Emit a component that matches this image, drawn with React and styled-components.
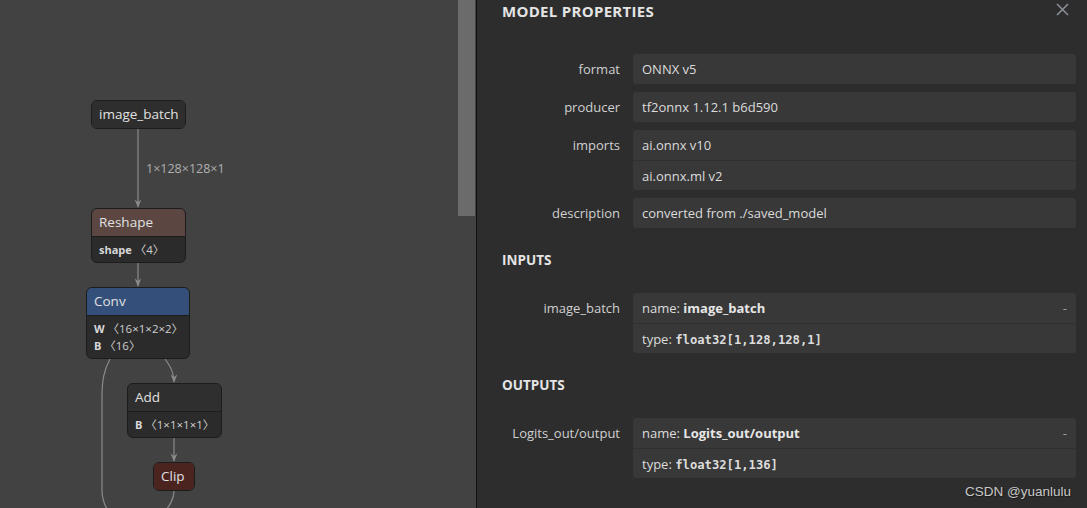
import React from 'react'
import styled, { createGlobalStyle } from 'styled-components'

// --- data ---
const NODES = [
  { id: 'input', title: 'image_batch', x: 91, y: 100, w: 95, kind: 'input' },
  { id: 'reshape', title: 'Reshape', x: 91, y: 208, w: 95, kind: 'shape', attrs: [['shape', '〈4〉']] },
  { id: 'conv', title: 'Conv', x: 86, y: 287, w: 104, kind: 'layer', attrs: [['W', '〈16×1×2×2〉'], ['B', '〈16〉']] },
  { id: 'add', title: 'Add', x: 127, y: 383, w: 95, kind: 'default', attrs: [['B', '〈1×1×1×1〉']] },
  { id: 'clip', title: 'Clip', x: 153, y: 462, w: 42, kind: 'activation' },
]

const HEADER_COLORS = {
  input: '#2e2e2e',
  default: '#2f2f2f',
  shape: '#5b4641',
  layer: '#34507a',
  activation: '#4b2420',
}

const PROPERTIES = [
  { name: 'format', values: ['ONNX v5'] },
  { name: 'producer', values: ['tf2onnx 1.12.1 b6d590'] },
  { name: 'imports', values: ['ai.onnx v10', 'ai.onnx.ml v2'] },
  { name: 'description', values: ['converted from ./saved_model'] },
]

const INPUTS = [{ name: 'image_batch', type: 'float32[1,128,128,1]' }]
const OUTPUTS = [{ name: 'Logits_out/output', type: 'float32[1,136]' }]

const GlobalStyle = createGlobalStyle`
  html, body {
    margin: 0;
    padding: 0;
    background: #2d2d2d;
  }
  body {
    font-family: "Open Sans", "Noto Sans", "Noto Sans CJK SC", sans-serif;
    -webkit-font-smoothing: antialiased;
  }
`

// --- graph ---
const Edges = () => (
  <EdgeLayer width="458" height="508">
    <defs>
      <marker id="arrow" viewBox="0 0 10 10" refX="9" refY="5" markerWidth="7" markerHeight="7" orient="auto">
        <path d="M0,1 L10,5 L0,9 L3,5 Z" fill="#8a8a8a" />
      </marker>
    </defs>
    <g stroke="#8a8a8a" strokeWidth="1.2" fill="none">
      <path d="M138,129 L138,207" markerEnd="url(#arrow)" />
      <path d="M138,263 L138,286" markerEnd="url(#arrow)" />
      <path d="M165,359 C170,366 174,372 174,382" markerEnd="url(#arrow)" />
      <path d="M174,437 L174,461" markerEnd="url(#arrow)" />
      <path d="M110,359 C104,370 102,380 102,398 L102,490 C102,502 106,510 114,518" />
      <path d="M174,491 C174,499 170,505 163,514" />
    </g>
    <EdgeLabel x="146" y="173">1×128×128×1</EdgeLabel>
  </EdgeLayer>
)

const GraphNode = ({ node }) => (
  <Node $x={node.x} $y={node.y} $w={node.w}>
    <NodeHeader $color={HEADER_COLORS[node.kind]} $round={!node.attrs}>
      {node.title}
    </NodeHeader>
    {node.attrs && (
      <NodeAttrs>
        {node.attrs.map(([k, v]) => (
          <NodeAttr key={k}>
            <b>{k}</b> <Bracketed>{v}</Bracketed>
          </NodeAttr>
        ))}
      </NodeAttrs>
    )}
  </Node>
)

// --- sidebar ---
const CloseIcon = () => (
  <svg width="13" height="13" viewBox="0 0 13 13">
    <path d="M1,1 L12,12 M12,1 L1,12" stroke="#8a8f96" strokeWidth="1.6" />
  </svg>
)

const PropRow = ({ name, children }) => (
  <Row>
    <RowLabel>{name}</RowLabel>
    <ValueBox>{children}</ValueBox>
  </Row>
)

const ArgRow = ({ arg }) => (
  <PropRow name={arg.name}>
    <ValueLine>
      <span>
        name: <b>{arg.name}</b>
      </span>
      <Toggle>-</Toggle>
    </ValueLine>
    <ValueLine>
      <span>
        type: <Code>{arg.type}</Code>
      </span>
    </ValueLine>
  </PropRow>
)

const App = () => {
  return (
    <>
      <GlobalStyle />
      <Page>
        <GraphArea>
          <Canvas>
            <Edges />
            {NODES.map((n) => (
              <GraphNode key={n.id} node={n} />
            ))}
          </Canvas>
          <ScrollTrack>
            <ScrollThumb />
          </ScrollTrack>
        </GraphArea>
        <Sidebar>
          <SidebarHeader>
            <SidebarTitle>MODEL PROPERTIES</SidebarTitle>
            <CloseButton>
              <CloseIcon />
            </CloseButton>
          </SidebarHeader>
          <SidebarContent>
            {PROPERTIES.map((p) => (
              <PropRow key={p.name} name={p.name}>
                {p.values.map((v) => (
                  <ValueLine key={v}>{v}</ValueLine>
                ))}
              </PropRow>
            ))}
            <SectionTitle>INPUTS</SectionTitle>
            {INPUTS.map((a) => (
              <ArgRow key={a.name} arg={a} />
            ))}
            <SectionTitle>OUTPUTS</SectionTitle>
            {OUTPUTS.map((a) => (
              <ArgRow key={a.name} arg={a} />
            ))}
          </SidebarContent>
          <Watermark>CSDN @yuanlulu</Watermark>
        </Sidebar>
      </Page>
    </>
  )
}

const Page = styled.div`
  display: flex;
  width: 100vw;
  height: 100vh;
  overflow: hidden;
`

const GraphArea = styled.div`
  display: flex;
  width: 476px;
  flex: none;
  background-color: #424242;
  border-right: 1px solid #111;
`

const Canvas = styled.div`
  position: relative;
  flex: 1;
  overflow: hidden;
`

const EdgeLayer = styled.svg`
  position: absolute;
  left: 0;
  top: 0;
`

const EdgeLabel = styled.text`
  font-family: "Open Sans", sans-serif;
  font-size: 12.5px;
  fill: #b0b0b0;
`

const ScrollTrack = styled.div`
  width: 18px;
  flex: none;
`

const ScrollThumb = styled.div`
  width: 17px;
  height: 216px;
  background-color: #6b6b6b;
`

const Node = styled.div`
  position: absolute;
  left: ${(p) => p.$x}px;
  top: ${(p) => p.$y}px;
  width: ${(p) => p.$w}px;
  box-sizing: border-box;
  border: 1px solid #1c1c1c;
  border-radius: 6px;
  overflow: hidden;
  background-color: #2b2b2b;
  color: #e0e0e0;
`

const NodeHeader = styled.div`
  height: 27px;
  padding: 0 7px;
  font-size: 13.5px;
  line-height: 27px;
  white-space: nowrap;
  background-color: ${(p) => p.$color};
  border-bottom: ${(p) => (p.$round ? 'none' : '1px solid #1c1c1c')};
`

const NodeAttrs = styled.div`
  padding: 4px 7px 4px;
`

const NodeAttr = styled.div`
  font-size: 11px;
  line-height: 17px;
  color: #cfcfcf;
  white-space: nowrap;

  b {
    font-weight: 700;
    color: #d8d8d8;
  }
`

const Bracketed = styled.span`
  font-family: "Open Sans", "Noto Sans CJK SC", sans-serif;
  font-size: 11.5px;
`

const Sidebar = styled.aside`
  position: relative;
  flex: 1;
  background-color: #2d2d2d;
  color: #d6d6d6;
`

const SidebarHeader = styled.div`
  display: flex;
  align-items: center;
  justify-content: space-between;
  height: 21px;
  padding: 0 18px 0 25px;
`

const SidebarTitle = styled.h1`
  margin: 0;
  font-size: 15px;
  font-weight: 700;
  color: #e4e4e4;
  letter-spacing: 0.3px;
`

const CloseButton = styled.div`
  display: flex;
  margin-top: -2px;
`

const SidebarContent = styled.div`
  padding: 33px 11px 0 25px;
`

const Row = styled.div`
  display: grid;
  grid-template-columns: 118px 1fr;
  column-gap: 13px;
  margin-bottom: 8px;
`

const RowLabel = styled.div`
  font-size: 13px;
  line-height: 30px;
  text-align: right;
  color: #d0d0d0;
  white-space: nowrap;
`

const ValueBox = styled.div`
  background-color: #383838;
  border-radius: 3px;
  overflow: hidden;
`

const ValueLine = styled.div`
  display: flex;
  justify-content: space-between;
  align-items: center;
  box-sizing: border-box;
  height: 30px;
  padding: 0 9px;
  font-size: 13px;
  color: #dcdcdc;

  & + & {
    border-top: 1px solid #303030;
  }

  b {
    font-weight: 700;
    color: #e6e6e6;
  }
`

const Code = styled.code`
  font-family: "DejaVu Sans Mono", monospace;
  font-size: 12.2px;
  font-weight: 700;
  color: #dcdcdc;
`

const Toggle = styled.span`
  color: #a0a0a0;
  font-size: 13px;
`

const SectionTitle = styled.h2`
  margin: 22px 0 23px;
  font-size: 13.5px;
  font-weight: 700;
  line-height: 20px;
  color: #e4e4e4;
`

const Watermark = styled.div`
  position: absolute;
  right: 16px;
  bottom: 9px;
  font-family: "Liberation Sans", Arial, sans-serif;
  font-size: 13.5px;
  color: #c8c8c8;
  text-shadow: 1px 1px 1px #1a1a1a;
`

export default App
